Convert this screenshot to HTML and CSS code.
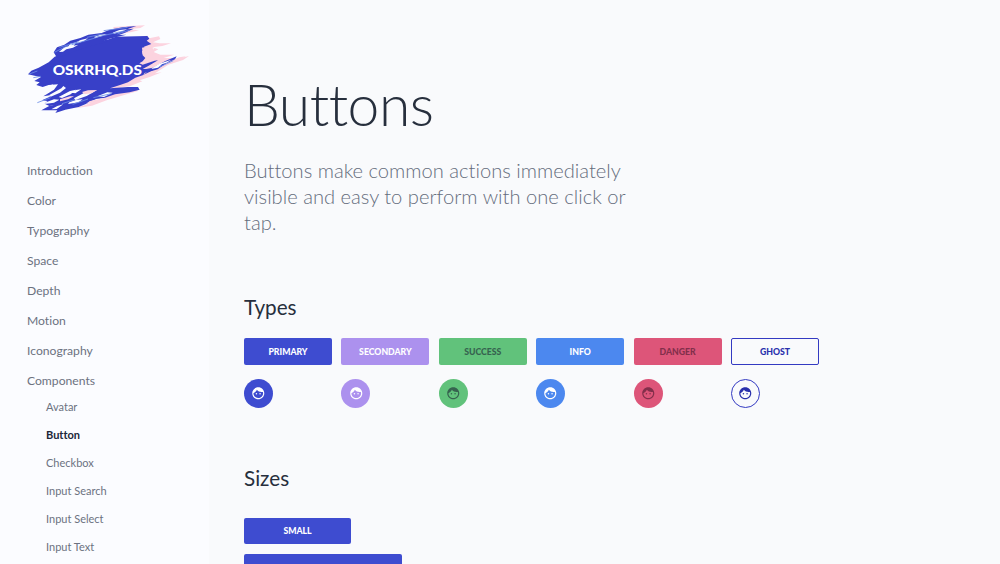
FILE: index.html
```html
<!DOCTYPE html>
<html lang="en">
<head>
<meta charset="utf-8">
<title>Buttons</title>
<link rel="stylesheet" href="styles.css">
</head>
<body>
<svg class="defs" width="0" height="0"><symbol id="face" viewBox="0 0 24 24"><path d="M10.25 13a1.25 1.25 0 1 1-2.5 0 1.25 1.25 0 0 1 2.5 0zM15 11.75a1.25 1.25 0 1 0 0 2.5 1.25 1.25 0 0 0 0-2.5zm7 .25c0 5.52-4.48 10-10 10S2 17.520 2 12 6.480 2 12 2s10 4.480 10 10zm-2 0c0-.78-.12-1.530-.33-2.240-.7.15-1.420.24-2.170.24-3.130 0-5.920-1.440-7.760-3.690C8.690 8.870 6.600 10.880 4 11.860V12c0 4.410 3.590 8 8 8s8-3.590 8-8z"/></symbol></svg>
<div class="page">
  <aside class="sidebar">
    <svg class="logo" viewBox="0 0 525 315">
      <g class="logo-pink">
        <path d="M365 64l18-2 4 8 30-6 4 8-22 10 20 3 34 0-26 8-30 4 18 6-14 8 20 8 42 0-32 10 28 0-12 8 60-14-18 12-44 14-40 26 20-3-36 14-30 10 8 3-36 14-24 4-20 8-60-10z"/>
        <path d="M280 36l60-4 35-1-14 8-34 4 30 3-22 5-50 8zM440 142l38-15 19-3-18 12-32 11-22 8zM310 226l46-8-6 6 4 4-34 10-60 18-44 16-50 8 40-14 60-22z"/>
      </g>
      <g class="logo-blue">
        <path d="M24 178l10-11 22-9 30-16 18-17 22-8 14-9 26-10 24-5 22-11 50-8 26-9 94-2 6 8-8 6 14 10-22 8 4 8-10 6 2 12 8 8-8 10-10 6 10 4 36-12 10-1-28 16-18 10 10 0 32-6-12 10-24 8-4 6-24 8-22 14-24 8-30 10 54-4 30 0 5 8-30 8-44 6-30 10-26 4-20 8-20 4-22 10-30 3-30 4-10-5 15-7-24 4-14-7 8-8-16-2 22-10 6-6-24 4 32-20 12-16-28 2-18 6-19-6 10-8-16-4 20-12-16-3z"/>
        <path d="M101 112l10-15 22-8 18-12 30-8 24-10 40-5 22-9 40-8 42-4-28 10 20-2-26 12-18 7 22-1-50 12-24 9 18 0-52 14-44 14-30 12-26 8z"/>
        <path d="M384 168l24-15 28-15 34-14-5 9-26 12-26 18-20 6-22 10z"/>
        <path d="M64 286l22-12 30-8 30-12 60-12-18 18 22 2-34 14-40 8-30 10 6-8z"/>
      </g>
      <g class="logo-gap">
        <path d="M117 111l16-14 12-3 6-8 18-4-8 10 14-3-16 9-20 5-10 7zM168 82l14-7 22-5-12 8-18 7zM222 66l20-7 20-2-18 7-18 5zM278 53l20-8 24-2-20 8-20 5zM74 216l26-8-8 9 8 2-18 12-20 3zM88 240l36-20 6-7 8 6-18 14-28 12zM116 246l34-18 18-4-16 14-26 11zM156 233l12-8 16-2-18 12zM162 250l34-18 30-4-26 15-34 12zM148 262l22-8 18-1-12 9-32 5zM78 262l24-9 16 1-16 9-28 4zM112 273l18-5-20 14-16 1zM232 244l30-12 16 1-26 13z"/>
        <path d="M398 158l20-12 36-12-14 9-14 5-12 10-20 4zM389 104l14-5-4 6zM432 96l14-2-8 5z"/>
      </g>
      <path class="logo-pink" d="M366 98l24-5 12 12-4 14-16 6-14-8zM186 231l18-5 28-1-18 10-20 3zM120 253l30-9 12 0-18 9-24 6zM210 258l32-7 16 0-26 10-34 5z"/>
      <path class="logo-streak" d="M103 112l42-21M118 97l58-17M155 89l74-21M201 67l46-10M230 66l82-18M292 57l38-12M251 47l72-10M28 177l24-9M40 188l22-4M52 263l40-15M126 266l38-12M158 268l46-16M220 248l54-12M418 156l42-19"/>
      <text x="98" y="179" textLength="268" lengthAdjust="spacingAndGlyphs">OSKRHQ.DS</text>
    </svg>
    <nav class="nav">
      <a>Introduction</a><a>Color</a><a>Typography</a><a>Space</a><a>Depth</a><a>Motion</a><a>Iconography</a><a>Components</a>
      <div class="subnav"><a>Avatar</a><a class="active">Button</a><a>Checkbox</a><a>Input Search</a><a>Input Select</a><a>Input Text</a></div>
    </nav>
  </aside>
  <main class="content">
    <h1>Buttons</h1>
    <p class="lead">Buttons make common actions immediately visible and easy to perform with one click or tap.</p>
    <h2 class="types-title">Types</h2>
    <div class="types">
      <div class="type"><button class="btn primary">PRIMARY</button><button class="round primary"><svg><use href="#face"/></svg></button></div>
      <div class="type"><button class="btn secondary">SECONDARY</button><button class="round secondary"><svg><use href="#face"/></svg></button></div>
      <div class="type"><button class="btn success">SUCCESS</button><button class="round success"><svg><use href="#face"/></svg></button></div>
      <div class="type"><button class="btn info">INFO</button><button class="round info"><svg><use href="#face"/></svg></button></div>
      <div class="type"><button class="btn danger">DANGER</button><button class="round danger"><svg><use href="#face"/></svg></button></div>
      <div class="type"><button class="btn ghost">GHOST</button><button class="round ghost"><svg><use href="#face"/></svg></button></div>
    </div>
    <h2 class="sizes-title">Sizes</h2>
    <div class="sizes"><button class="btn primary small">SMALL</button><button class="btn primary medium"></button></div>
  </main>
</div>
</body>
</html>
```

FILE: styles.css
```css
* { box-sizing: border-box; }
body { margin: 0; height: 564px; overflow: hidden; background: #f9fafc; font-family: Lato, sans-serif; font-variant-ligatures: none; color: #272f3d; }
.defs { display: block; }
.page { display: flex; height: 564px; overflow: hidden; }
.sidebar { width: 209px; flex: none; background: #fbfcff; padding: 15px 0 0 20px; }
.logo { display: block; width: 175px; height: 105px; }
.logo-pink { fill: #fcd3df; }
.logo-blue { fill: #3840c8; }
.logo-gap { fill: #fbfcff; }
.logo-streak { fill: none; stroke: #6b8de6; stroke-width: 2.5; }
.logo text { font: 900 42px Lato, sans-serif; fill: #fff; }
.nav { display: flex; flex-direction: column; padding: 36px 0 0 7px; }
.nav a { font-size: 12.15px; line-height: 30px; color: #6c727f; }
.subnav { display: flex; flex-direction: column; padding-left: 19px; margin-top: -3px; }
.subnav a { font-size: 11px; line-height: 28.1px; }
.subnav .active { font-weight: 700; color: #202738; }
.content { flex: 1; padding: 69px 0 0 35px; }
h1 { margin: 0; font-size: 57px; line-height: 70px; font-weight: 300; letter-spacing: -.5px; }
.lead { margin: 18px 0 0; width: 400px; font-size: 20.150px; line-height: 26px; font-weight: 300; color: #656d7c; }
h2 { margin: 0; font-size: 20.7px; line-height: 28px; font-weight: 400; }
.types-title { margin-top: 58px; }
.types { display: flex; gap: 9.4px; margin-top: 17px; }
.type { display: flex; flex-direction: column; gap: 14px; }
button { display: flex; align-items: center; justify-content: center; border: 0; padding: 0; margin: 0; color: #fff; font: 900 8.7px Lato, sans-serif; }
.btn { width: 88px; height: 26.500px; border-radius: 2px; }
.round { width: 29px; height: 29px; border-radius: 50%; }
.round svg { width: 14.500px; height: 14.500px; fill: currentColor; }
.primary { background: #3e4cd0; }
.secondary { background: #ac91ee; }
.success { background: #61c27b; color: #36634f; }
.info { background: #4c88ef; }
.danger { background: #dd5579; color: #832f4b; }
.ghost { background: transparent; border: 1px solid #343ac2; color: #2930ac; }
.sizes-title { margin-top: 56px; }
.sizes { display: flex; flex-direction: column; gap: 10px; margin-top: 26px; }
.small { width: 107px; }
.medium { width: 158px; height: 36px; }
```
